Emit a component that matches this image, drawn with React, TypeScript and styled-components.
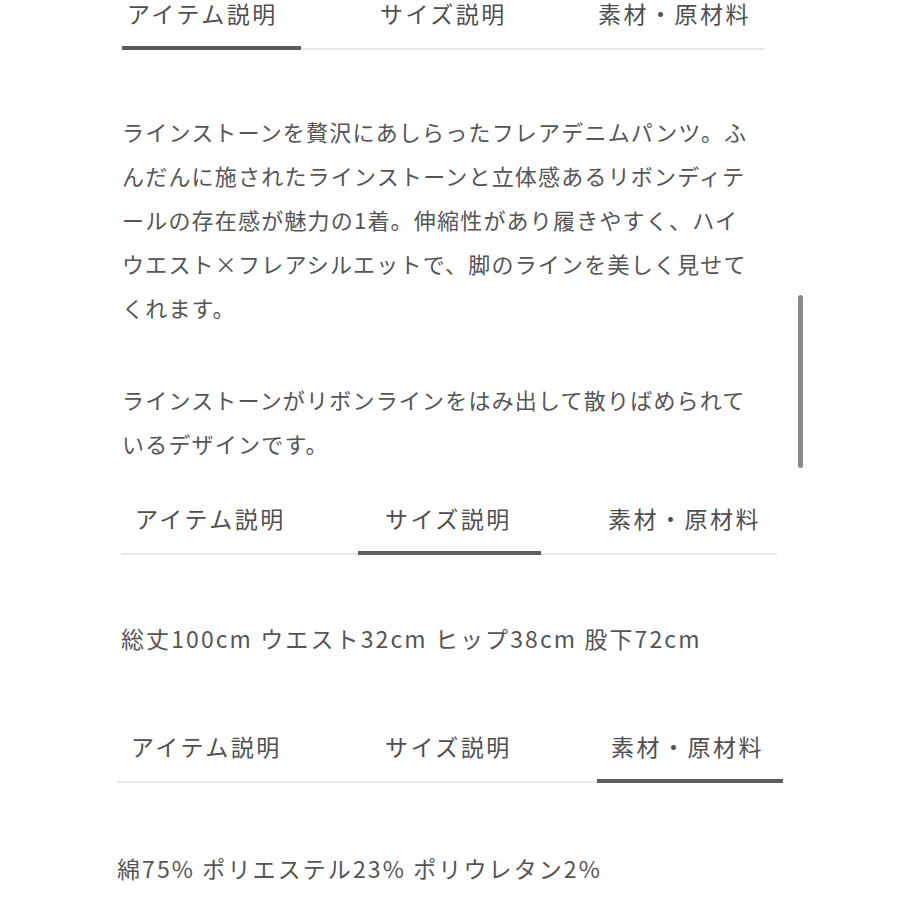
import React from "react"
import styled, { createGlobalStyle } from "styled-components"

const GlobalStyle = createGlobalStyle`
  html, body {
    margin: 0;
    padding: 0;
    background: #ffffff;
  }
  body {
    font-family: "Noto Sans CJK JP", "Noto Sans", sans-serif;
    color: #525252;
  }
`

const Page = styled.div`
  position: relative;
  width: 900px;
  height: 900px;
  overflow: hidden;
  background: #ffffff;
`

const Block = styled.section<{ $left: number; $width: number; $top?: number }>`
  margin-left: ${(p) => p.$left}px;
  margin-top: ${(p) => p.$top ?? 0}px;
  width: ${(p) => p.$width}px;
`

const TabBar = styled.div<{ $cols: string }>`
  display: grid;
  grid-template-columns: ${(p) => p.$cols};
  box-shadow: inset 0 -2px 0 #e9e9e9;
`

const Tab = styled.div<{ $active?: boolean; $pad: number }>`
  padding-left: ${(p) => p.$pad}px;
  padding-bottom: 18px;
  border-bottom: 4px solid ${(p) => (p.$active ? "#5e5e5e" : "transparent")};
  font-size: 23px;
  line-height: 30px;
  letter-spacing: 2.5px;
  color: #4f4f4f;
  white-space: nowrap;
  cursor: pointer;
`

const Body = styled.div<{ $top: number; $bottom: number }>`
  padding-top: ${(p) => p.$top}px;
  padding-bottom: ${(p) => p.$bottom}px;
`

const Paragraph = styled.p`
  margin: 0;
  font-size: 22px;
  line-height: 44px;
  letter-spacing: 1.2px;
  white-space: pre;
  color: #555555;

  & + & {
    margin-top: 48px;
  }
`

const SpecLine = styled.p`
  margin: 0;
  font-size: 23px;
  line-height: 44px;
  letter-spacing: 2.1px;
  white-space: pre;
  color: #555555;
`

const Scrollbar = styled.div`
  position: absolute;
  left: 798px;
  top: 295px;
  width: 5px;
  height: 173px;
  border-radius: 3px;
  background: #8a8a8a;
`

const labels = ["アイテム説明", "サイズ説明", "素材・原材料"]

function Tabs({ cols, pads, active }: { cols: string; pads: number[]; active: number }) {
  return (
    <TabBar $cols={cols}>
      {labels.map((label, i) => (
        <Tab key={label} $pad={pads[i]} $active={i === active}>
          {label}
        </Tab>
      ))}
    </TabBar>
  )
}

export default function App() {
  return (
    <Page>
      <GlobalStyle />
      <Block $left={122} $width={643} $top={-2}>
        <Tabs cols="179px 280px 184px" pads={[5, 79, 17]} active={0} />
        <Body $top={59} $bottom={38}>
          <Paragraph>
            {"ラインストーンを贅沢にあしらったフレアデニムパンツ。ふ\nんだんに施されたラインストーンと立体感あるリボンディテ\nールの存在感が魅力の1着。伸縮性があり履きやすく、ハイ\nウエスト×フレアシルエットで、脚のラインを美しく見せて\nくれます。"}
          </Paragraph>
          <Paragraph>
            {"ラインストーンがリボンラインをはみ出して散りばめられて\nいるデザインです。"}
          </Paragraph>
        </Body>
      </Block>

      <Block $left={121} $width={656}>
        <Tabs cols="237px 183px 236px" pads={[14, 27, 67]} active={1} />
        <Body $top={61} $bottom={71}>
          <SpecLine>総丈100cm ウエスト32cm ヒップ38cm 股下72cm</SpecLine>
        </Body>
      </Block>

      <Block $left={117} $width={666}>
        <Tabs cols="233px 247px 186px" pads={[14, 35, 14]} active={2} />
        <Body $top={63} $bottom={20}>
          <SpecLine>綿75% ポリエステル23% ポリウレタン2%</SpecLine>
        </Body>
      </Block>

      <Scrollbar />
    </Page>
  )
}
